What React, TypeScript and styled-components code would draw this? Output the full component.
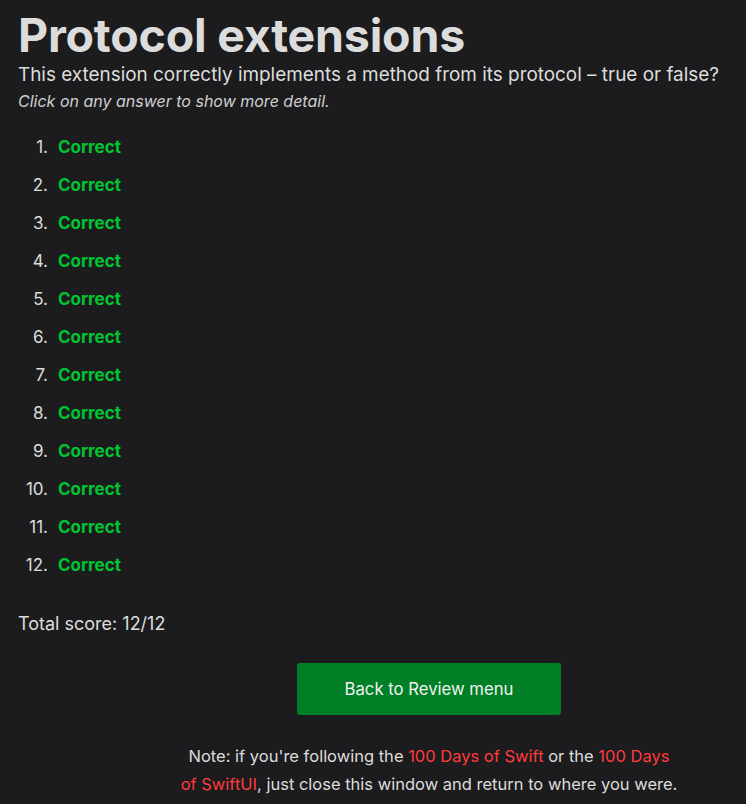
import React from "react";
import styled, { createGlobalStyle } from "styled-components";

const Global = createGlobalStyle`
  html, body { margin: 0; padding: 0; background: #1c1c1e; }
  body { font-family: Inter, "Noto Sans", sans-serif; color: #dcdcdc; }
`;

const Page = styled.main`
  padding: 7px 18px 0 18px;
  display: flex;
  flex-direction: column;
`;

const Title = styled.h1`
  margin: 0;
  font-size: 46.5px;
  font-weight: 700;
  line-height: 56px;
  letter-spacing: -0.2px;
  color: #dcdcdc;
`;

const Subtitle = styled.p`
  margin: 0;
  font-size: 18.9px;
  line-height: 24px;
  color: #dcdcdc;
`;

const Hint = styled.p`
  margin: 3px 0 0 0;
  font-size: 16px;
  line-height: 22px;
  font-style: italic;
  color: #cfcfcf;
`;

const List = styled.ol`
  margin: 24px 0 0 0;
  padding: 0;
  list-style: none;
  display: flex;
  flex-direction: column;
  gap: 16px;
  font-size: 17px;
  line-height: 22px;
`;

const Item = styled.li`
  display: grid;
  grid-template-columns: 30px auto;
  column-gap: 10px;
  align-items: baseline;
`;

const Num = styled.span`
  text-align: right;
  color: #dcdcdc;
`;

const Answer = styled.span<{ $ok: boolean }>`
  font-weight: 700;
  color: ${(p) => (p.$ok ? "#00c531" : "#ff3b3b")};
  cursor: pointer;
  justify-self: start;
`;

const Score = styled.p`
  margin: 36px 0 0 0;
  font-size: 18px;
  line-height: 24px;
`;

const Footer = styled.div`
  margin-top: 27px;
  padding-left: 112px;
  display: flex;
  flex-direction: column;
  align-items: center;
`;

const Button = styled.button`
  width: 264px;
  height: 52px;
  border: none;
  border-radius: 3px;
  background: #007f26;
  color: #f2f2f2;
  font-family: Inter, "Noto Sans", sans-serif;
  font-size: 16.7px;
  cursor: pointer;
`;

const Note = styled.p`
  margin: 27px 0 0 0;
  max-width: 500px;
  text-align: center;
  font-size: 16.5px;
  line-height: 28px;
  color: #dcdcdc;
`;

const Link = styled.a`
  color: #ff3b3b;
  text-decoration: none;
`;

export default function App() {
  const answers = Array.from({ length: 12 }, () => true);
  return (
    <>
      <Global />
      <Page>
        <Title>Protocol extensions</Title>
        <Subtitle>
          This extension correctly implements a method from its protocol – true or false?
        </Subtitle>
        <Hint>Click on any answer to show more detail.</Hint>
        <List>
          {answers.map((ok, i) => (
            <Item key={i}>
              <Num>{i + 1}.</Num>
              <Answer $ok={ok}>{ok ? "Correct" : "Wrong"}</Answer>
            </Item>
          ))}
        </List>
        <Score>Total score: 12/12</Score>
        <Footer>
          <Button>Back to Review menu</Button>
          <Note>
            Note: if you're following the <Link href="#">100 Days of Swift</Link> or the{" "}
            <Link href="#">100 Days of SwiftUI</Link>, just close this window and return to where you were.
          </Note>
        </Footer>
      </Page>
    </>
  );
}
